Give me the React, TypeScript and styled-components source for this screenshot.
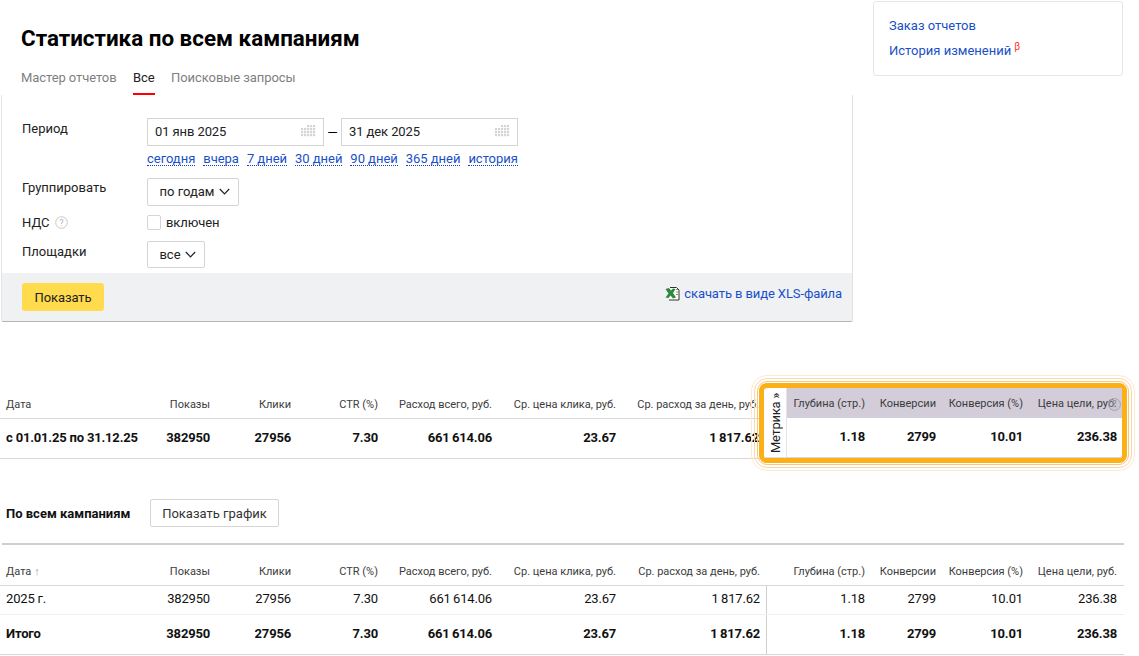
import React from "react";
import styled, { createGlobalStyle } from "styled-components";

const Global = createGlobalStyle`
  html, body { margin: 0; padding: 0; background: #fff; }
  body { font-family: Roboto, "Liberation Sans", sans-serif; color: #000; font-size: 13px; }
  * { box-sizing: border-box; }
`;

const Page = styled.div`
  width: 1139px;
  height: 656px;
  overflow: hidden;
`;
const TopRow = styled.div`
  display: flex;
  align-items: flex-start;
  height: 322px;
`;
const LeftCol = styled.div`
  width: 853px;
  flex: none;
`;
const Title = styled.h1`
  margin: 0;
  padding: 25px 0 0 21px;
  font-size: 22.4px;
  line-height: 26px;
  font-weight: 700;
`;
const Tabs = styled.div`
  display: flex;
  gap: 16.5px;
  margin: 18px 0 0 21px;
`;
const Tab = styled.div<{ $active?: boolean }>`
  font-size: 13px;
  line-height: 17px;
  height: 26px;
  letter-spacing: -0.08px;
  padding-bottom: 7px;
  color: ${(p) => (p.$active ? "#222" : "#7f7f7f")};
  border-bottom: 2px solid ${(p) => (p.$active ? "#f00" : "transparent")};
`;
const Panel = styled.div`
  margin-left: 1px;
  width: 852px;
  height: 227px;
  border-left: 1px solid #e6e6e6;
  border-right: 1px solid #e0e0e0;
  border-bottom: 1px solid #b5b5b5;
  border-radius: 0 0 2px 2px;
  display: flex;
  flex-direction: column;
  justify-content: space-between;
`;
const Form = styled.div`
  padding: 23px 0 0 20px;
  display: flex;
  flex-direction: column;
`;
const FormRow = styled.div<{ $gap: number }>`
  display: grid;
  grid-template-columns: 125px 1fr;
  margin-bottom: ${(p) => p.$gap}px;
`;
const Label = styled.div<{ $top: number }>`
  font-size: 13px;
  line-height: 16px;
  color: #222;
  padding-top: ${(p) => p.$top}px;
  display: flex;
  align-items: center;
  gap: 5px;
  align-self: start;
`;
const DateLine = styled.div`
  display: flex;
  align-items: center;
`;
const DateBox = styled.div`
  width: 177px;
  height: 28px;
  border: 1px solid #d5d5d5;
  padding: 0 7px 2px;
  font-size: 13px;
  letter-spacing: -0.1px;
  color: #222;
  display: flex;
  align-items: center;
  justify-content: space-between;
`;
const Dash = styled.span`
  width: 17px;
  text-align: center;
  font-size: 13.5px;
`;
const Links = styled.div`
  display: flex;
  gap: 8px;
  margin-top: 6px;
  height: 14px;
  width: 372px;
`;
const QuickLink = styled.span`
  font-size: 13px;
  letter-spacing: -0.03px;
  line-height: 13px;
  color: #1a4fc8;
  border-bottom: 1px dotted #0a3fd8;
  white-space: nowrap;
`;
const SelectBtn = styled.div<{ $w: number }>`
  width: ${(p) => p.$w}px;
  height: 27.5px;
  border: 1px solid #d5d5d5;
  border-radius: 2px;
  padding-left: 3px;
  font-size: 13px;
  color: #222;
  display: flex;
  align-items: center;
  justify-content: center;
  gap: 4px;
`;
const CheckLine = styled.div`
  display: flex;
  align-items: center;
  gap: 5px;
  font-size: 13px;
  letter-spacing: -0.1px;
  color: #222;
`;
const CheckBox = styled.div`
  width: 14px;
  height: 15px;
  border: 1px solid #d5d5d5;
  border-radius: 2px;
`;
const Footer = styled.div`
  height: 48px;
  background: #f0f1f3;
  padding: 10px 10px 0 20px;
  display: flex;
  justify-content: space-between;
`;
const ShowBtn = styled.div`
  width: 82px;
  height: 28px;
  border-radius: 3px;
  background: #ffdb4d;
  font-size: 13px;
  letter-spacing: -0.1px;
  display: flex;
  align-items: center;
  justify-content: center;
  color: #222;
`;
const XlsLink = styled.div`
  display: flex;
  align-items: center;
  gap: 4px;
  height: 21px;
  font-size: 13px;
  letter-spacing: -0.1px;
  color: #1a4fc8;
`;
const SideCard = styled.div`
  margin: 1px 0 0 20px;
  width: 250px;
  height: 75px;
  border: 1px solid #e6e6e6;
  border-radius: 3px;
  padding: 15px 15px;
  display: flex;
  flex-direction: column;
  gap: 8px;
`;
const SideLink = styled.div`
  font-size: 13px;
  line-height: 17px;
  color: #1a4fc8;
`;
const Beta = styled.sup`
  color: #f33;
  font-size: 10px;
  line-height: 0;
  margin-left: 3px;
`;

const Summary = styled.div`
  display: flex;
  margin-top: 66px;
`;
const Stack = styled.div<{ $w?: number }>`
  width: ${(p) => (p.$w ? p.$w + "px" : "auto")};
  flex: none;
`;
const Row = styled.div<{ $cols: string; $h: number; $line?: string; $pad?: number }>`
  display: grid;
  grid-template-columns: ${(p) => p.$cols};
  height: ${(p) => p.$h}px;
  align-items: center;
  padding-top: ${(p) => p.$pad ?? 0}px;
  border-bottom: 1px solid ${(p) => p.$line ?? "transparent"};
`;
const Head = styled.div<{ $first?: boolean; $end?: number }>`
  font-size: 11px;
  line-height: 14px;
  color: #3c3c3c;
  white-space: nowrap;
  text-align: ${(p) => (p.$first ? "left" : "right")};
  padding: ${(p) => (p.$first ? "0 0 0 6px" : `0 ${p.$end ?? 7}px 0 0`)};
`;
const Cell = styled.div<{ $first?: boolean; $bold?: boolean; $end?: number; $rule?: boolean }>`
  font-size: 13px;
  line-height: 16px;
  letter-spacing: -0.18px;
  color: #111;
  font-weight: ${(p) => (p.$bold ? 700 : 400)};
  white-space: nowrap;
  text-align: ${(p) => (p.$first ? "left" : "right")};
  padding: ${(p) => (p.$first ? "0 0 2px 6px" : `0 ${p.$end ?? 7}px 2px 0`)};
  ${(p) => p.$rule && "align-self: stretch; display: flex; align-items: center; justify-content: flex-end; border-right: 1px solid #cfcfcf; padding-right: 6px;"}
`;
const MetrikaGroup = styled.div`
  position: relative;
  flex: none;
  width: 358px;
  height: 70px;
  border-radius: 3px;
  display: flex;
  background: #fff;
  box-shadow: 0 0 0 5px #fbb116;
`;
const Ring = styled.span<{ $spread: number; $color: string }>`
  position: absolute;
  inset: -${(p) => p.$spread}px;
  border: 1px solid ${(p) => p.$color};
  border-radius: ${(p) => p.$spread + 3}px;
  pointer-events: none;
`;
const MetrikaTab = styled.div`
  width: 23px;
  flex: none;
  border-right: 1px solid #e4e4e4;
  border-bottom: 1px solid #ddd;
  display: flex;
  align-items: center;
  justify-content: center;
`;
const MetrikaLabel = styled.span`
  writing-mode: vertical-rl;
  transform: rotate(180deg);
  font-size: 13px;
  letter-spacing: -0.3px;
  color: #222;
  white-space: nowrap;
`;
const MetrikaBody = styled.div`
  flex: 1;
`;
const HelpDot = styled.span`
  position: absolute;
  right: 1px;
  top: 10px;
  width: 13px;
  height: 13px;
  border-radius: 50%;
  border: 1px solid #a9a5af;
  background: rgba(190, 184, 196, 0.3);
  font-size: 9px;
  line-height: 11px;
  text-align: center;
  color: #87838d;
`;
const MetrikaHead = styled(Row)`
  background: #d3ccd9;
`;
const SectionBar = styled.div`
  display: flex;
  align-items: center;
  height: 28px;
  margin-top: 40px;
`;
const SectionTitle = styled.div`
  font-size: 13px;
  font-weight: 700;
  width: 150px;
  padding-left: 6px;
  color: #111;
`;
const GhostBtn = styled.div`
  width: 129px;
  height: 28px;
  border: 1px solid #d5d5d5;
  border-radius: 2px;
  font-size: 13px;
  color: #333;
  display: flex;
  align-items: center;
  justify-content: center;
`;
const Thick = styled.div`
  height: 2px;
  margin: 16px 0 0 2px;
  width: 1122px;
  background: #cfcfcf;
`;
const SortMark = styled.span`
  color: #a0a0a0;
  margin-left: 3px;
`;

const Cal = () => (
  <svg width="15" height="12" viewBox="0 0 15 12" fill="#d4d4d4">
    {[0, 1, 2, 3].map((r) =>
      [0, 1, 2, 3, 4].map((c) =>
        (r === 0 && c < 2) ? null : <rect key={`${r}-${c}`} x={c * 3} y={r * 3} width="2.2" height="2.2" />
      )
    )}
  </svg>
);
const Chevron = () => (
  <svg width="11" height="7" viewBox="0 0 11 7" fill="none" stroke="#222" strokeWidth="1.2">
    <path d="M0.8 1 L5.5 5.8 L10.2 1" />
  </svg>
);
const Help = () => (
  <svg width="13" height="13" viewBox="0 0 13 13">
    <circle cx="6.5" cy="6.5" r="5.8" fill="none" stroke="#c8c8c8" strokeWidth="1" />
    <text x="6.5" y="9.5" textAnchor="middle" fontSize="8.5" fill="#b0b0b0" fontFamily="Roboto">?</text>
  </svg>
);
const Excel = () => (
  <svg width="15" height="15" viewBox="0 0 15 15">
    <path d="M5 1.5 H11.5 L14 4 V14 H4" fill="#fff" stroke="#333" strokeWidth="1" />
    <path d="M0.5 3 L4 2 L6 4.5 L8 2.5 L10.5 3 L8 7 L11 11.5 L8 12.5 L5.5 9.5 L3.5 12 L0.5 11.5 L3.5 7.5 Z" fill="#2c8a3e" />
    <path d="M11 3.5 H13 M11 6 H13 M11 8.5 H13" stroke="#7a9a7a" strokeWidth="1" />
  </svg>
);

const leftCols = "145px 72px 81px 87px 114px 124px 141px";
const fullCols = "145px 72px 81px 87px 114px 124px 144px 105px 71px 87px 94px";
const metCols = "85px 71px 87px 92px";

const heads = ["Дата", "Показы", "Клики", "CTR (%)", "Расход всего, руб.", "Ср. цена клика, руб.", "Ср. расход за день, руб."];
const metHeads = ["Глубина (стр.)", "Конверсии", "Конверсия (%)", "Цена цели, руб."];
const vals = ["382950", "27956", "7.30", "661\u2009614.06", "23.67", "1\u2009817.62"];
const metVals = ["1.18", "2799", "10.01", "236.38"];
const quick = ["сегодня", "вчера", "7 дней", "30 дней", "90 дней", "365 дней", "история"];

export default function App() {
  return (
    <Page>
      <Global />
      <TopRow>
        <LeftCol>
          <Title>Статистика по всем кампаниям</Title>
          <Tabs>
            <Tab>Мастер отчетов</Tab>
            <Tab $active>Все</Tab>
            <Tab>Поисковые запросы</Tab>
          </Tabs>
          <Panel>
            <Form>
              <FormRow $gap={12}>
                <Label $top={3}>Период</Label>
                <div>
                  <DateLine>
                    <DateBox>01 янв 2025<Cal /></DateBox>
                    <Dash>—</Dash>
                    <DateBox>31 дек 2025<Cal /></DateBox>
                  </DateLine>
                  <Links>
                    {quick.map((q) => <QuickLink key={q}>{q}</QuickLink>)}
                  </Links>
                </div>
              </FormRow>
              <FormRow $gap={9}>
                <Label $top={2}>Группировать</Label>
                <SelectBtn $w={92}>по годам <Chevron /></SelectBtn>
              </FormRow>
              <FormRow $gap={10}>
                <Label $top={0}>НДС <Help /></Label>
                <CheckLine><CheckBox />включен</CheckLine>
              </FormRow>
              <FormRow $gap={0}>
                <Label $top={3}>Площадки</Label>
                <SelectBtn $w={58}>все <Chevron /></SelectBtn>
              </FormRow>
            </Form>
            <Footer>
              <ShowBtn>Показать</ShowBtn>
              <XlsLink><Excel />скачать в виде XLS-файла</XlsLink>
            </Footer>
          </Panel>
        </LeftCol>
        <SideCard>
          <SideLink>Заказ отчетов</SideLink>
          <SideLink>История изменений<Beta>β</Beta></SideLink>
        </SideCard>
      </TopRow>

      <Summary>
        <Stack $w={764}>
          <Row $cols={leftCols} $h={31} $line="#d8d8d8" $pad={3}>
            {heads.map((h, i) => <Head key={h} $first={i === 0} $end={i === 6 ? 5 : 7}>{h}</Head>)}
          </Row>
          <Row $cols={leftCols} $h={40} $line="#d8d8d8">
            <Cell $first $bold>с 01.01.25 по 31.12.25</Cell>
            {vals.map((v, i) => <Cell key={i} $bold $end={i === 5 ? 5 : 7}>{v}</Cell>)}
          </Row>
        </Stack>
        <MetrikaGroup>
          <MetrikaTab><MetrikaLabel>Метрика »</MetrikaLabel></MetrikaTab>
          <MetrikaBody>
            <MetrikaHead $cols={metCols} $h={30} $pad={3}>
              {metHeads.map((h, i) => <Head key={h} $end={i === 3 ? 5 : 7}>{h}</Head>)}
            </MetrikaHead>
            <Row $cols={metCols} $h={40} $line="#d8d8d8">
              {metVals.map((v, i) => <Cell key={i} $bold $end={i === 3 ? 5 : 7}>{v}</Cell>)}
            </Row>
          </MetrikaBody>
          <HelpDot>?</HelpDot>
          <Ring $spread={7} $color="#f9c584" />
          <Ring $spread={10} $color="#fbd8a8" />
          <Ring $spread={13} $color="#fde9cf" />
        </MetrikaGroup>
      </Summary>

      <SectionBar>
        <SectionTitle>По всем кампаниям</SectionTitle>
        <GhostBtn>Показать график</GhostBtn>
      </SectionBar>
      <Thick />
      <Stack $w={1124}>
        <Row $cols={fullCols} $h={41} $line="#d8d8d8" $pad={13}>
          <Head $first>Дата<SortMark>↑</SortMark></Head>
          {heads.slice(1).map((h) => <Head key={h}>{h}</Head>)}
          {metHeads.map((h) => <Head key={h}>{h}</Head>)}
        </Row>
        <Row $cols={fullCols} $h={29} $line="#efefef">
          <Cell $first>2025 г.</Cell>
          {vals.map((v, i) => <Cell key={i} $rule={i === 5}>{v}</Cell>)}
          {metVals.map((v, i) => <Cell key={i}>{v}</Cell>)}
        </Row>
        <Row $cols={fullCols} $h={40} $line="#d8d8d8">
          <Cell $first $bold>Итого</Cell>
          {vals.map((v, i) => <Cell key={i} $bold $rule={i === 5}>{v}</Cell>)}
          {metVals.map((v, i) => <Cell key={i} $bold>{v}</Cell>)}
        </Row>
      </Stack>
    </Page>
  );
}
